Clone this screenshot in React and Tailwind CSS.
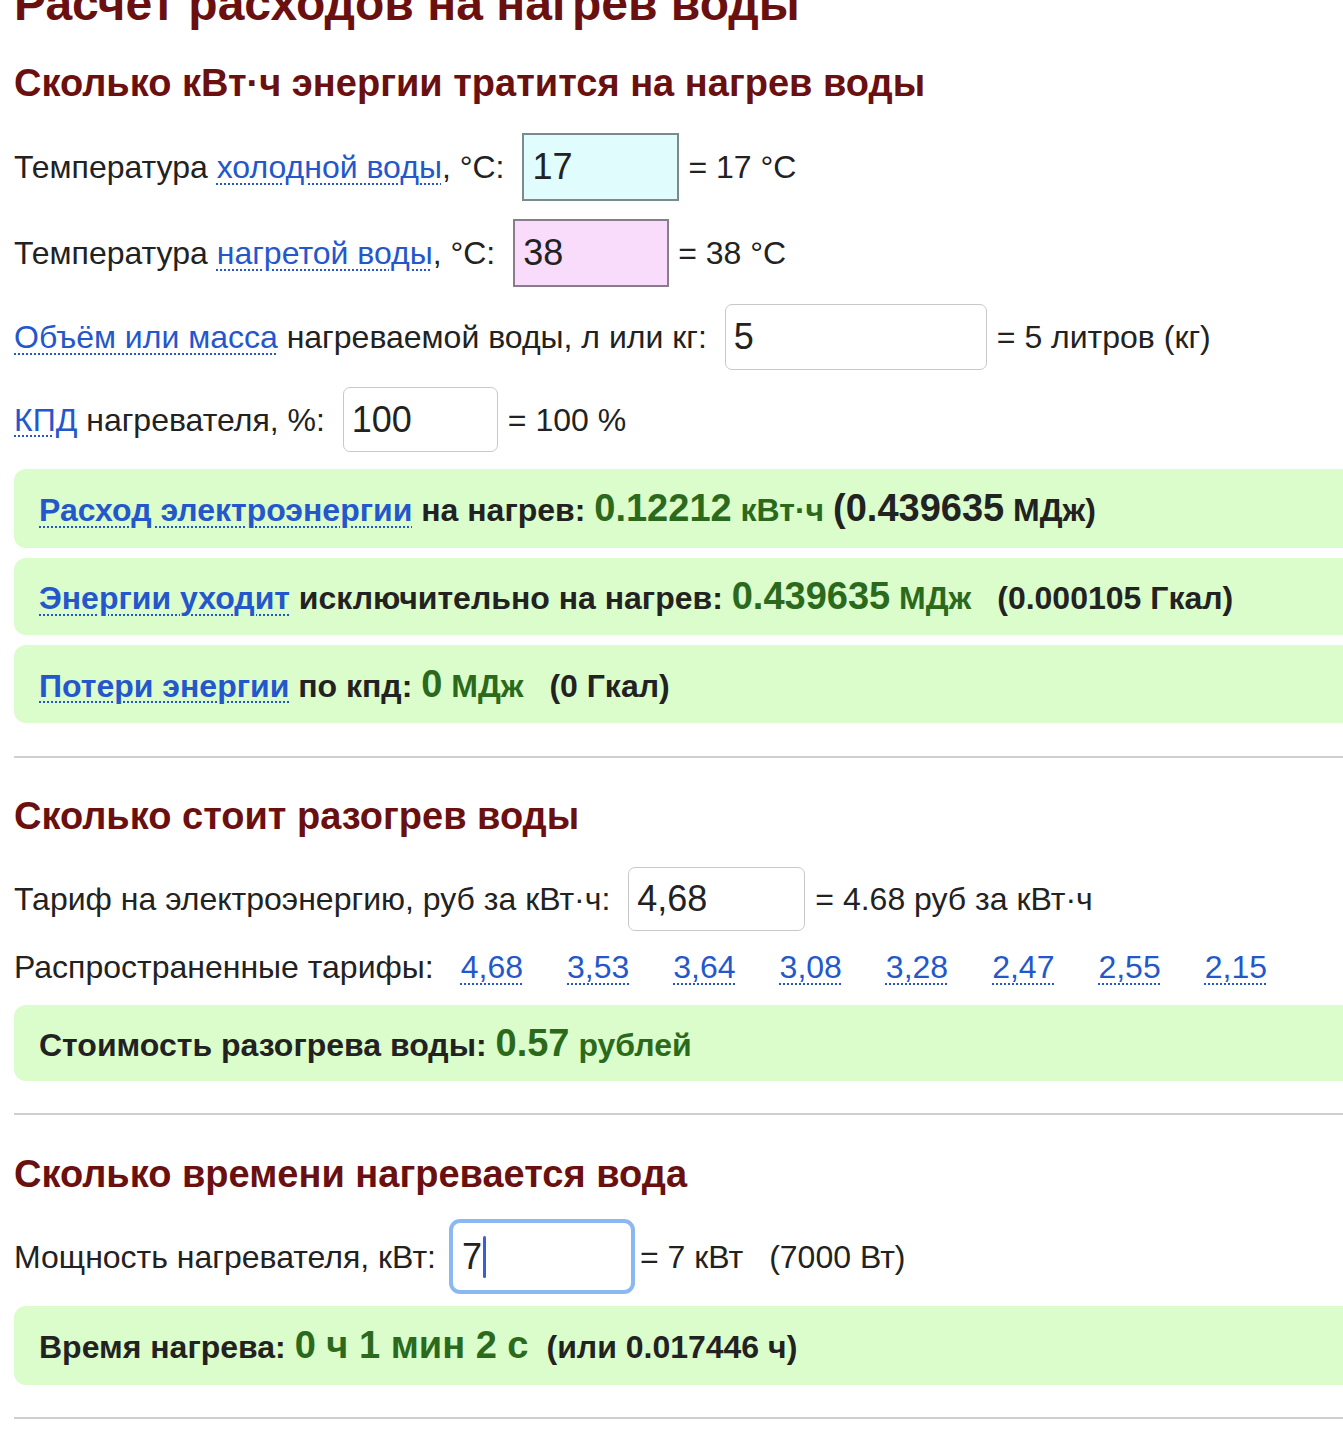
const linkCls =
  "text-[#2457cc] underline decoration-dotted decoration-[#2457cc] decoration-2 underline-offset-[5px]";

function Field({ value, className = "" }) {
  return (
    <input
      readOnly
      defaultValue={value}
      className={`h-full px-[8px] text-[36px] text-[#222] outline-none ${className}`}
    />
  );
}

function ResultBox({ children, className = "" }) {
  return (
    <div className={`flex items-center rounded-[12px] bg-[#dbfccb] pl-[25px] font-bold text-[32px] text-[#222] ${className}`}>
      <div className="whitespace-nowrap">{children}</div>
    </div>
  );
}

function Hr({ className = "" }) {
  return <div className={`h-[2px] bg-[#cfcfcf] ${className}`} />;
}

const G = "text-[#2b6a1c]";

export default function App() {
  return (
    <div className="w-[1343px] h-[1456px] overflow-hidden bg-white" style={{ fontFamily: '"Liberation Sans", Arial, sans-serif' }}>
      <div className="w-[1420px] pl-[14px] text-[32px] text-[#222]">
        <h1 className="mt-[-20px] h-[48px] text-[48px] leading-[48px] font-bold text-[#6a1010] whitespace-nowrap">
          Расчет расходов на нагрев воды
        </h1>

        <h2 className="mt-[35px] h-[40px] text-[38px] leading-[40px] font-bold text-[#6a1010] whitespace-nowrap">
          Сколько кВт·ч энергии тратится на нагрев воды
        </h2>

        <div className="mt-[30px] flex h-[68px] items-center whitespace-nowrap">
          <span>
            Температура <span className={linkCls}>холодной воды</span>, °C:
          </span>
          <Field value="17" className="ml-[18px] w-[157px] border-2 border-[#7b8b8b] bg-[#e0fcfd]" />
          <span className="ml-[9px]">= 17 °C</span>
        </div>

        <div className="mt-[18px] flex h-[68px] items-center whitespace-nowrap">
          <span>
            Температура <span className={linkCls}>нагретой воды</span>, °C:
          </span>
          <Field value="38" className="ml-[18px] w-[156px] border-2 border-[#8a7d8b] bg-[#f9dcfb]" />
          <span className="ml-[9px]">= 38 °C</span>
        </div>

        <div className="mt-[17px] flex h-[66px] items-center whitespace-nowrap">
          <span>
            <span className={linkCls}>Объём или масса</span> нагреваемой воды, л или кг:
          </span>
          <Field value="5" className="ml-[18px] w-[262px] rounded-[7px] border border-[#c8c8c8] bg-white" />
          <span className="ml-[10px]">= 5 литров (кг)</span>
        </div>

        <div className="mt-[17px] flex h-[65px] items-center whitespace-nowrap">
          <span>
            <span className={linkCls}>КПД</span> нагревателя, %:
          </span>
          <Field value="100" className="ml-[18px] w-[155px] rounded-[7px] border border-[#c8c8c8] bg-white" />
          <span className="ml-[10px]">= 100 %</span>
        </div>

        <ResultBox className="mt-[17px] h-[79px]">
          <span className={linkCls}>Расход электроэнергии</span> на нагрев:{" "}
          <span className={`${G} text-[38px]`}>0.12212</span> <span className={G}>кВт·ч</span>{" "}
          <span className="text-[38px]">(0.439635</span> МДж)
        </ResultBox>

        <ResultBox className="mt-[10px] h-[77px]">
          <span className={linkCls}>Энергии уходит</span> исключительно на нагрев:{" "}
          <span className={`${G} text-[38px]`}>0.439635</span> <span className={G}>МДж</span>
          <span className="ml-[26px]">(0.000105 Гкал)</span>
        </ResultBox>

        <ResultBox className="mt-[10px] h-[78px]">
          <span className={linkCls}>Потери энергии</span> по кпд:{" "}
          <span className={`${G} text-[38px]`}>0</span> <span className={G}>МДж</span>
          <span className="ml-[26px]">(0 Гкал)</span>
        </ResultBox>

        <Hr className="mt-[33px]" />

        <h2 className="mt-[38px] h-[40px] text-[38px] leading-[40px] font-bold text-[#6a1010] whitespace-nowrap">
          Сколько стоит разогрев воды
        </h2>

        <div className="mt-[31px] flex h-[64px] items-center whitespace-nowrap">
          <span>Тариф на электроэнергию, руб за кВт·ч:</span>
          <Field value="4,68" className="ml-[18px] w-[177px] rounded-[7px] border border-[#c8c8c8] bg-white" />
          <span className="ml-[10px]">= 4.68 руб за кВт·ч</span>
        </div>

        <div className="mt-[16px] flex h-[40px] items-center whitespace-nowrap">
          <span className="mr-[27px]">Распространенные тарифы:</span>
          <div className="flex gap-[44px]">
            {["4,68", "3,53", "3,64", "3,08", "3,28", "2,47", "2,55", "2,15"].map((t) => (
              <span key={t} className={linkCls}>
                {t}
              </span>
            ))}
          </div>
        </div>

        <ResultBox className="mt-[18px] h-[76px]">
          Стоимость разогрева воды: <span className={`${G} text-[38px]`}>0.57</span>{" "}
          <span className={G}>рублей</span>
        </ResultBox>

        <Hr className="mt-[32px]" />

        <h2 className="mt-[39px] h-[40px] text-[38px] leading-[40px] font-bold text-[#6a1010] whitespace-nowrap">
          Сколько времени нагревается вода
        </h2>

        <div className="mt-[25px] flex h-[75px] items-center whitespace-nowrap">
          <span>Мощность нагревателя, кВт:</span>
          <div className="ml-[13px] flex h-full w-[186px] items-center rounded-[11px] border-[4px] border-[#8bb8f2] bg-white px-[9px] text-[36px]">
            <span>7</span>
            <span className="ml-[1px] h-[42px] w-[3px] rounded-full bg-[#3a5fd0]" />
          </div>
          <span className="ml-[5px]">= 7 кВт</span>
          <span className="ml-[26px]">(7000 Вт)</span>
        </div>

        <ResultBox className="mt-[12px] h-[79px]">
          Время нагрева: <span className={`${G} text-[38px]`}>0 ч 1 мин 2 с</span>
          <span className="ml-[18px]">(или 0.017446 ч)</span>
        </ResultBox>

        <Hr className="mt-[32px]" />
      </div>
    </div>
  );
}
